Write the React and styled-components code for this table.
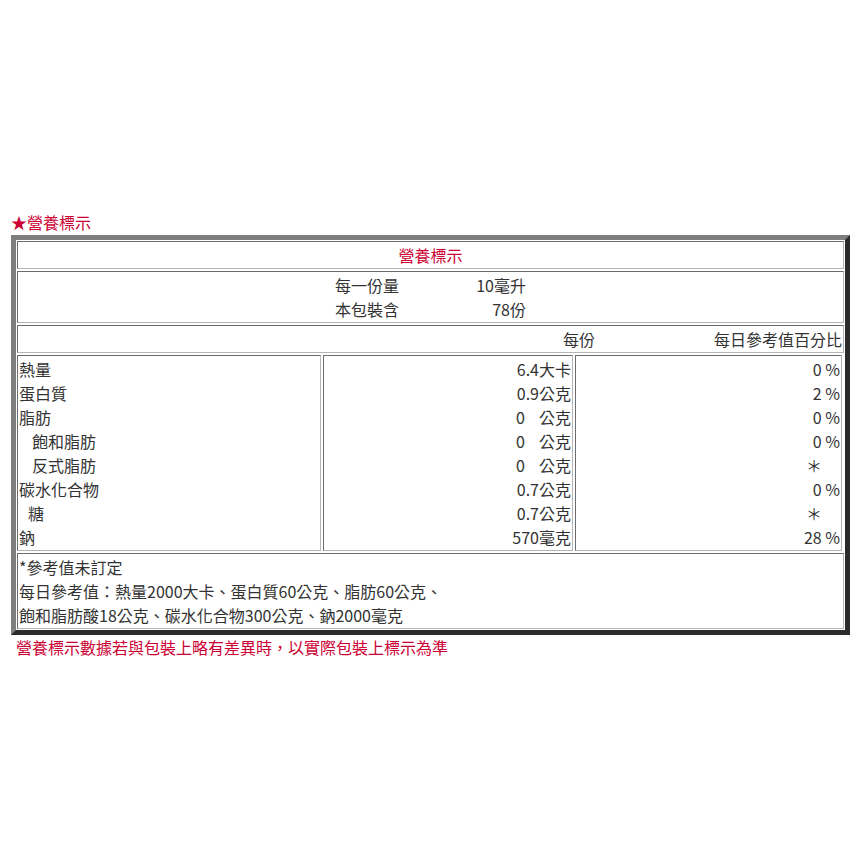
import React from "react";
import styled, { createGlobalStyle } from "styled-components";

const Global = createGlobalStyle`
  html, body { margin: 0; padding: 0; background: #ffffff; }
  body {
    font-family: "Noto Sans CJK TC", "Noto Sans", sans-serif;
    font-size: 16px;
    line-height: 24px;
    color: #333333;
  }
`;

const Page = styled.div`
  padding: 210px 0 0 11px;
  width: 838px;
`;

const Heading = styled.div`
  color: #cc0033;
  font-size: 16px;
  line-height: 24px;
  height: 25px;
`;

const Frame = styled.div`
  width: 827px;
  border-style: solid;
  border-width: 5px;
  border-color: #7f7f7f #2b2b2b #2b2b2b #7f7f7f;
  padding: 1px;
  display: flex;
  flex-direction: column;
  gap: 2px;
`;

const Cell = styled.div`
  border-style: solid;
  border-width: 1px;
  border-color: #6d6d6d #b5b5b5 #b5b5b5 #6d6d6d;
  padding: 1px;
  text-align: ${(p) => p.$align || "left"};
  color: ${(p) => p.$color || "#333333"};
  min-width: 0;
`;

const Row = styled.div`
  display: grid;
  grid-template-columns: 304px 250px 267px;
  gap: 2px;
`;

const Serving = styled.div`
  display: grid;
  grid-template-columns: 64px 127px;
  width: 191px;
  margin: 0 auto;
`;

const Label = styled.span`
  text-align: left;
  white-space: nowrap;
`;

const Value = styled.span`
  text-align: right;
  white-space: nowrap;
`;

const HeaderLine = styled.div`
  display: flex;
`;

const HeaderPer = styled.div`
  width: 576px;
  text-align: right;
`;

const HeaderDaily = styled.div`
  flex: 1;
  text-align: right;
`;

const Line = styled.div`
  white-space: nowrap;
  padding-left: ${(p) => p.$indent || 0}px;
  padding-right: ${(p) => p.$pr || 0}px;
`;

const Gap = styled.span`
  display: inline-block;
  width: ${(p) => p.$w}px;
`;

const Note = styled.div`
  color: #cc0033;
  padding-left: 5px;
  line-height: 24px;
`;

const items = [
  { name: "熱量", indent: 0, num: "6.4", unit: "大卡", pct: "0 %" },
  { name: "蛋白質", indent: 0, num: "0.9", unit: "公克", pct: "2 %" },
  { name: "脂肪", indent: 0, num: "0", unit: "公克", pct: "0 %" },
  { name: "飽和脂肪", indent: 13, num: "0", unit: "公克", pct: "0 %" },
  { name: "反式脂肪", indent: 13, num: "0", unit: "公克", pct: "*" },
  { name: "碳水化合物", indent: 0, num: "0.7", unit: "公克", pct: "0 %" },
  { name: "糖", indent: 9, num: "0.7", unit: "公克", pct: "*" },
  { name: "鈉", indent: 0, num: "570", unit: "毫克", pct: "28 %" },
];

export default function App() {
  return (
    <>
      <Global />
      <Page>
        <Heading>★營養標示</Heading>
        <Frame>
          <Cell $align="center" $color="#cc0033">營養標示</Cell>
          <Cell>
            <Serving>
              <Label>每一份量</Label>
              <Value>10毫升</Value>
              <Label>本包裝含</Label>
              <Value>78份</Value>
            </Serving>
          </Cell>
          <Cell>
            <HeaderLine>
              <HeaderPer>每份</HeaderPer>
              <HeaderDaily>每日參考值百分比</HeaderDaily>
            </HeaderLine>
          </Cell>
          <Row>
            <Cell>
              {items.map((it) => (
                <Line key={it.name} $indent={it.indent}>{it.name}</Line>
              ))}
            </Cell>
            <Cell $align="right">
              {items.map((it) => (
                <Line key={it.name}>
                  {it.num}
                  {it.num === "0" && <Gap $w={14} />}
                  {it.unit}
                </Line>
              ))}
            </Cell>
            <Cell $align="right">
              {items.map((it) => (
                <Line key={it.name} $pr={it.pct === "*" ? 18 : 0}>
                  {it.pct === "*" ? "＊" : it.pct}
                </Line>
              ))}
            </Cell>
          </Row>
          <Cell>
            <Line>*參考值未訂定</Line>
            <Line>每日參考值：熱量2000大卡、蛋白質60公克、脂肪60公克、</Line>
            <Line>飽和脂肪酸18公克、碳水化合物300公克、鈉2000毫克</Line>
          </Cell>
        </Frame>
        <Note>營養標示數據若與包裝上略有差異時，以實際包裝上標示為準</Note>
      </Page>
    </>
  );
}
